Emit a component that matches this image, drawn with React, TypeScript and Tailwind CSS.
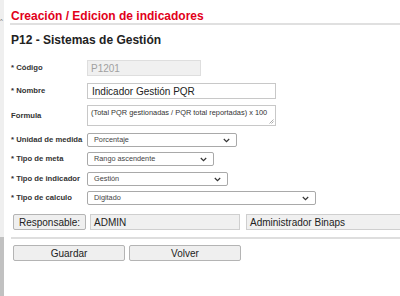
import React from "react"

const font = { fontFamily: '"Liberation Sans", Arial, sans-serif' }

function Chevron() {
  return (
    <svg width="7" height="5" viewBox="0 0 7 5" className="shrink-0">
      <path d="M0.8 1 L3.5 3.6 L6.2 1" fill="none" stroke="#333" strokeWidth="1.2" />
    </svg>
  )
}

function Select({ value, width }: { value: string; width: string }) {
  return (
    <div className={`${width} h-[14px] border border-[#a9a9a9] rounded-[2px] bg-white flex items-center justify-between pl-[6px] pr-[6px]`}>
      <span className="text-[7.3px] text-[#444] leading-none whitespace-nowrap">{value}</span>
      <Chevron />
    </div>
  )
}

function Label({ children }: { children: React.ReactNode }) {
  return <div className="w-[77px] shrink-0 pl-[1px] text-[7.7px] font-bold text-[#333] leading-none whitespace-nowrap">{children}</div>
}

export default function App() {
  return (
    <div style={font} className="w-[400px] h-[296px] overflow-hidden bg-white flex">
      {/* left scrollbar of the frame */}
      <div className="w-[4px] shrink-0 flex flex-col">
        <div className="flex-1 bg-[#efefef] relative">
          <span className="absolute top-[18px] left-0 text-[6px] text-[#666] leading-none">^</span>
        </div>
        <div className="h-[59px] bg-[#c1c1c1]" />
      </div>

      <div className="flex-1 pl-[6px] flex flex-col">
        <div className="pt-[10px] text-[12px] font-bold text-[#e2001a] leading-[12px] pl-[1px] whitespace-nowrap">
          Creación / Edicion de indicadores
        </div>
        <div className="mt-[1px] h-[2px] bg-[#e0e0e0]" />

        <div className="mt-[9px] text-[12px] font-bold text-[#222] leading-[12px] pl-[1px]">
          P12 - Sistemas de Gestión
        </div>

        <div className="mt-[14px] flex items-center h-[16px]">
          <Label>* Código</Label>
          <div className="w-[114px] h-[16px] border border-[#dedede] bg-[#f0f0f0] flex items-center pl-[3px] text-[10px] text-[#a0a0a0]">P1201</div>
        </div>

        <div className="mt-[7px] flex items-center h-[16px]">
          <Label>* Nombre</Label>
          <div className="w-[189px] h-[16px] border border-[#c8c8c8] bg-white flex items-center pl-[4px] text-[10px] text-[#222]">Indicador Gestión PQR</div>
        </div>

        <div className="mt-[6px] flex items-center h-[21px]">
          <Label>Formula</Label>
          <div className="relative w-[189px] h-[21px] border border-[#c8c8c8] bg-white pl-[3px] pt-[3px] text-[7.4px] text-[#333] leading-none whitespace-nowrap">
            (Total PQR gestionadas / PQR total reportadas) x 100
            <svg width="5" height="5" viewBox="0 0 5 5" className="absolute right-[1px] bottom-[1px]">
              <path d="M0.5 4.5 L4.5 0.5 M2.5 4.5 L4.5 2.5" stroke="#888" strokeWidth="0.7" />
            </svg>
          </div>
        </div>

        <div className="mt-[7px] flex items-center">
          <Label>* Unidad de medida</Label>
          <Select value="Porcentaje" width="w-[150px]" />
        </div>
        <div className="mt-[5px] flex items-center">
          <Label>* Tipo de meta</Label>
          <Select value="Rango ascendente" width="w-[127px]" />
        </div>
        <div className="mt-[6px] flex items-center">
          <Label>* Tipo de indicador</Label>
          <Select value="Gestión" width="w-[141px]" />
        </div>
        <div className="mt-[5px] flex items-center">
          <Label>* Tipo de calculo</Label>
          <Select value="Digitado" width="w-[229px]" />
        </div>

        <div className="mt-[9px] flex items-center h-[16px] pl-[3px]">
          <div className="w-[73px] h-[16px] border border-[#b4b4b4] rounded-[2px] bg-[#efefef] flex items-center justify-center text-[10px] text-[#222]">Responsable:</div>
          <div className="ml-[4px] w-[150px] h-[16px] border border-[#cfcfcf] bg-[#f0f0f0] flex items-center pl-[3px] text-[10px] text-[#222]">ADMIN</div>
          <div className="ml-[6px] flex-1 h-[16px] border border-[#cfcfcf] border-r-0 bg-[#f0f0f0] flex items-center pl-[3px] text-[10px] text-[#222] whitespace-nowrap">Administrador Binaps</div>
        </div>

        <div className="mt-[7px] ml-[1px] h-[2px] bg-[#dedede]" />

        <div className="mt-[6px] flex pl-[3px] gap-[4px]">
          <div className="w-[112px] h-[16px] border border-[#b4b4b4] rounded-[2px] bg-[#efefef] flex items-center justify-center text-[10px] text-[#222]">Guardar</div>
          <div className="w-[112px] h-[16px] border border-[#b4b4b4] rounded-[2px] bg-[#efefef] flex items-center justify-center text-[10px] text-[#222]">Volver</div>
        </div>
      </div>
    </div>
  )
}
